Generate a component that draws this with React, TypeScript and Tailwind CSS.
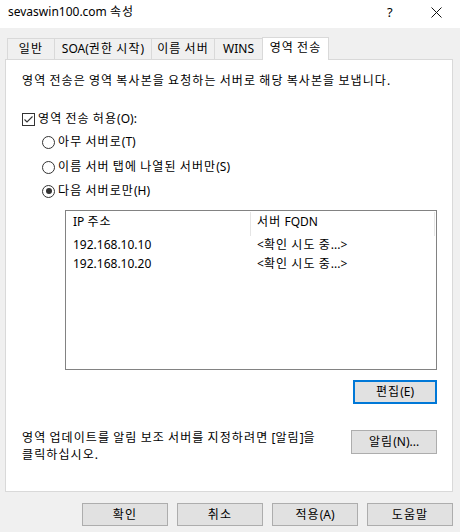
import React from 'react';

const font = { fontFamily: '"Noto Sans", "Noto Sans CJK KR", sans-serif' };

// Hangul runs are spaced a bit wider to match the dialog font's metrics
function K({ children }: { children: string }) {
    const parts = children.split(/([\uAC00-\uD7A3]+)/);
    return (
        <span>
            {parts.map((p, i) =>
                /[\uAC00-\uD7A3]/.test(p) ? (
                    <span key={i} className="tracking-[1.1px]">{p}</span>
                ) : (
                    <React.Fragment key={i}>{p}</React.Fragment>
                )
            )}
        </span>
    );
}

function Radio({ checked, label }: { checked?: boolean; label: string }) {
    return (
        <div className="flex items-center h-[16px] ml-[36px]">
            <span className="w-[13px] h-[13px] rounded-full border border-[#333] bg-white flex items-center justify-center">
                {checked && <span className="w-[6px] h-[6px] rounded-full bg-[#333]" />}
            </span>
            <span className="ml-[3px]"><K>{label}</K></span>
        </div>
    );
}

function Btn({ label, focused, className = '' }: { label: string; focused?: boolean; className?: string }) {
    return (
        <div
            className={`flex items-center justify-center bg-[#e1e1e1] ${focused ? 'border-2 border-[#0078d7]' : 'border border-[#adadad]'} ${className}`}
        >
            <K>{label}</K>
        </div>
    );
}

export default function App() {
    const tabs = ['일반', 'SOA(권한 시작)', '이름 서버', 'WINS'];
    const tabWidths = ['w-[47px]', 'w-[97px]', 'w-[63px]', 'w-[48px]'];
    const rows = [
        { ip: '192.168.10.10', fqdn: '<확인 시도 중...>' },
        { ip: '192.168.10.20', fqdn: '<확인 시도 중...>' },
    ];

    return (
        <div className="w-[460px] h-[532px] bg-[#f0f0f0] text-[12px] leading-[16px] text-black overflow-hidden" style={font}>
            {/* Title bar */}
            <div className="h-[28px] bg-white flex items-center pl-[8px]">
                <span className="flex-1 -mt-[4px]"><K>sevaswin100.com 속성</K></span>
                <span className="text-[13px] w-[20px] -mt-[4px] mr-[24px]">?</span>
                <svg width="11" height="11" viewBox="0 0 11 11" className="mr-[18px] -mt-[4px]">
                    <path d="M0.5 0.5L10.5 10.5M10.5 0.5L0.5 10.5" stroke="#111" strokeWidth="1" />
                </svg>
            </div>

            {/* Tabs */}
            <div className="flex items-end h-[31px] pl-[7px]">
                {tabs.map((t, i) => (
                    <div
                        key={t}
                        className={`h-[21px] ${tabWidths[i]} border-l border-t border-[#d9d9d9] flex items-center justify-center pb-[1px]`}
                    >
                        <K>{t}</K>
                    </div>
                ))}
                <div className="h-[23px] w-[67px] -mb-[1px] bg-white border-l border-t border-r border-[#d9d9d9] flex items-center justify-center pb-[2px] relative z-10">
                    <K>영역 전송</K>
                </div>
            </div>

            {/* Panel */}
            <div className="mx-[5px] w-[448px] h-[433px] bg-white border border-[#d9d9d9] pt-[13px] pl-[16px]">
                <div><K>영역 전송은 영역 복사본을 요청하는 서버로 해당 복사본을 보냅니다.</K></div>

                <div className="flex items-center h-[16px] mt-[22px]">
                    <span className="w-[13px] h-[13px] border border-[#333] bg-white flex items-center justify-center">
                        <svg width="11" height="11" viewBox="0 0 11 11">
                            <path d="M1.5 5.5L4 8L9.5 2.5" stroke="#333" strokeWidth="1.1" fill="none" />
                        </svg>
                    </span>
                    <span className="ml-[3px]"><K>영역 전송 허용(O):</K></span>
                </div>

                <div className="-ml-[16px]">
                    <div className="mt-[7px]" />
                    <Radio label="아무 서버로(T)" />
                    <div className="mt-[9px]" />
                    <Radio label="이름 서버 탭에 나열된 서버만(S)" />
                    <div className="mt-[8px]" />
                    <Radio checked label="다음 서버로만(H)" />

                    {/* List */}
                    <div className="ml-[59px] mt-[11px] w-[372px] h-[160px] border border-[#828282] bg-white">
                        <div className="flex h-[24px] items-start">
                            <div className="w-[184px] pl-[7px] pt-[3px]"><K>IP 주소</K></div>
                            <div className="w-px h-[24px] bg-[#e5e5e5] mt-[1px]" />
                            <div className="w-[183px] pl-[6px] pt-[3px]"><K>서버 FQDN</K></div>
                            <div className="w-px h-[24px] bg-[#e5e5e5] mt-[1px]" />
                        </div>
                        {rows.map((r) => (
                            <div key={r.ip} className="flex h-[19px] items-center">
                                <div className="w-[185px] pl-[7px]">{r.ip}</div>
                                <div className="pl-[6px]"><K>{r.fqdn}</K></div>
                            </div>
                        ))}
                    </div>

                    <div className="flex justify-end w-[431px] mt-[10px]">
                        <Btn label="편집(E)" focused className="w-[84px] h-[24px]" />
                    </div>

                    <div className="flex mt-[26px] ml-[16px] w-[415px]">
                        <div className="flex-1">
                            <div><K>영역 업데이트를 알림 보조 서버를 지정하려면 [알림]을</K></div>
                            <div className="mt-[1px]"><K>클릭하십시오.</K></div>
                        </div>
                        <Btn label="알림(N)..." className="w-[86px] h-[24px]" />
                    </div>
                </div>
            </div>

            {/* Bottom buttons */}
            <div className="flex justify-end gap-[9px] pr-[7px] mt-[11px]">
                <Btn label="확인" className="w-[86px] h-[23px]" />
                <Btn label="취소" className="w-[86px] h-[23px]" />
                <Btn label="적용(A)" className="w-[86px] h-[23px]" />
                <Btn label="도움말" className="w-[86px] h-[23px]" />
            </div>
        </div>
    );
}
